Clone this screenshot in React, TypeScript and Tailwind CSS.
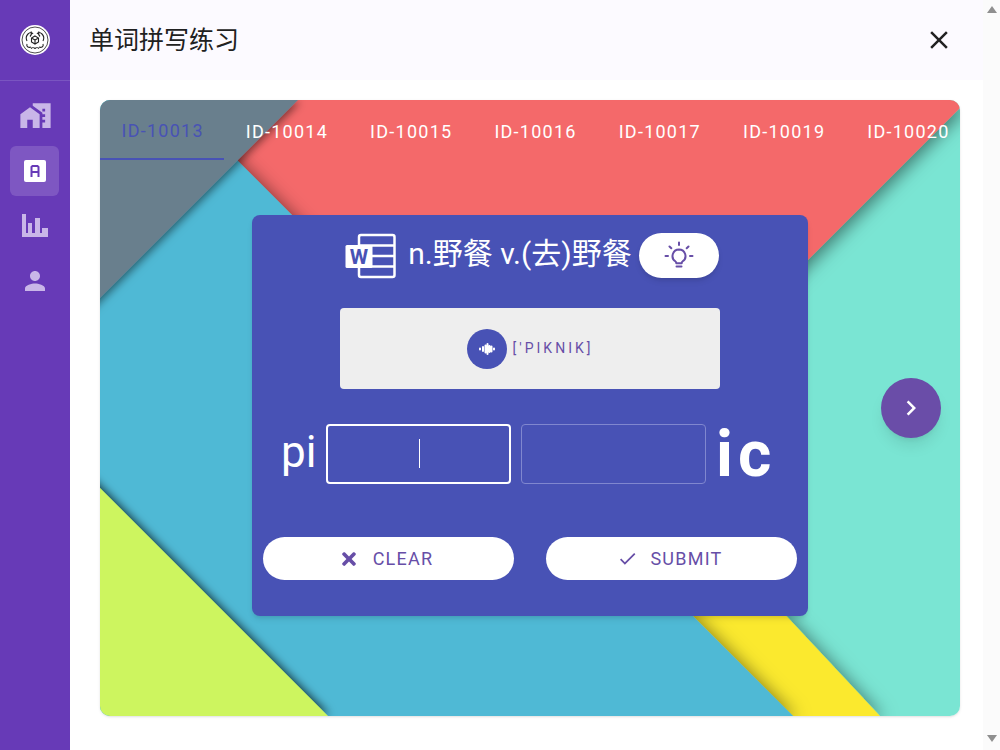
import { useState } from 'react';
import { MdMapsHomeWork, MdPerson, MdClose, MdCheck, MdChevronRight } from 'react-icons/md';
import { FaTimes } from 'react-icons/fa';

const tabs = ['ID-10013', 'ID-10014', 'ID-10015', 'ID-10016', 'ID-10017', 'ID-10019', 'ID-10020'];

function Backdrop() {
  return (
    <svg className="absolute inset-0 w-full h-full" viewBox="100 100 860 616" preserveAspectRatio="none">
      <defs>
        <filter id="shade" x="-20%" y="-20%" width="140%" height="140%">
          <feDropShadow dx="3" dy="3" stdDeviation="9" floodColor="#000" floodOpacity="0.5" />
        </filter>
        <filter id="shadeGreen" x="-20%" y="-20%" width="140%" height="140%">
          <feDropShadow dx="1" dy="-1" stdDeviation="5" floodColor="#000" floodOpacity="0.75" />
        </filter>
        <filter id="shadeSmall" x="-20%" y="-20%" width="140%" height="140%">
          <feDropShadow dx="2" dy="2" stdDeviation="4" floodColor="#000" floodOpacity="0.5" />
        </filter>
      </defs>
      <rect x="100" y="100" width="860" height="616" fill="#7ae5d3" />
      <polygon points="570,495 650,470 880,716 793,716" fill="#fbe92f" filter="url(#shade)" />
      <polygon points="177,100 960,100 960,108 572,496" fill="#f4696b" filter="url(#shade)" />
      <polygon points="40,100 177,100 793,716 40,716" fill="#4fb9d5" filter="url(#shade)" />
      <polygon points="40,428 328,716 40,716" fill="#cdf55f" filter="url(#shadeGreen)" />
      <polygon points="40,100 298,100 40,358" fill="#697f8d" filter="url(#shadeSmall)" />
    </svg>
  );
}

function WordIcon() {
  return (
    <svg width="51" height="46" viewBox="0 0 51 46" fill="none">
      <rect x="14" y="2" width="35.500" height="42" rx="2" stroke="#fff" strokeWidth="2.500" />
      <path d="M14 12.500H49M14 23H49M14 33.500H49" stroke="#fff" strokeWidth="2.500" />
      <rect x="0.500" y="12" width="27" height="23" rx="1.500" fill="#fff" />
      <text x="14" y="30.500" textAnchor="middle" fill="#4852b5" fontSize="21" fontWeight="700" fontFamily="Roboto, sans-serif">W</text>
    </svg>
  );
}

function BulbIcon() {
  return (
    <svg width="30" height="30" viewBox="0 0 30 30" fill="none" stroke="#674ea7" strokeWidth="2" strokeLinecap="round" strokeLinejoin="round">
      <path d="M15 8.500a6.500 6.500 0 0 0-3.700 11.800c.7.500 1 1.200 1 2h5.400c0-.8.300-1.500 1-2A6.500 6.500 0 0 0 15 8.500z" />
      <path d="M12.500 25.500h5" />
      <path d="M15 1.500v2.500M5.500 5.500l1.800 1.800M24.500 5.500l-1.800 1.800M1.500 15H4M26 15h2.500" />
    </svg>
  );
}

export default function App() {
  const [first, setFirst] = useState('');
  const [second, setSecond] = useState('');

  return (
    <div className="flex h-[750px] w-[1000px] overflow-hidden bg-white font-['Roboto','Noto_Sans_CJK_SC',sans-serif]">
      {/* 侧边栏 */}
      <aside className="w-[70px] shrink-0 bg-[#673ab7] flex flex-col items-center">
        <div className="w-full h-[81px] flex items-center justify-center border-b border-[#7a55c1]">
          <svg width="30" height="30" viewBox="0 0 30 30">
            <circle cx="15" cy="15" r="15" fill="#fff" />
            <circle cx="15" cy="15" r="13" fill="none" stroke="#222" strokeWidth="0.800" />
            <path d="M15 11l3.500 2v4L15 19l-3.500-2v-4zM15 15v4M15 15l3.500-2M15 15l-3.500-2M8 9c2-2 4-2 5 0M22 9c-2-2-4-2-5 0M7 19c-1 3 2 4 4 3M23 19c1 3-2 4-4 3M8 9c-2 2-2 5-1 7M22 9c2 2 2 5 1 7M11 6.500c1 2 0 4-1 5M19 6.500c-1 2 0 4 1 5M11 23.500c1-1 3-1 4 0M19 23.500c-1-1-3-1-4 0" fill="none" stroke="#222" strokeWidth="1.100" />
          </svg>
        </div>
        <div className="flex flex-col items-center pt-[10px]">
          <div className="w-[50px] h-[50px] flex items-center justify-center pb-[2px] text-[#c9b6e8]">
            <MdMapsHomeWork size={33} />
          </div>
          <div className="w-[49px] h-[50px] mt-[5px] mr-[1px] rounded-md bg-[#7e57c2] flex items-center justify-center">
            <svg width="24" height="24" viewBox="0 0 24 24">
              <rect x="1" y="1" width="22" height="22" rx="2" fill="#fff" />
              <path d="M8.500 18V8l1-1h5l1 1v10M8.500 13h7" fill="none" stroke="#673ab7" strokeWidth="2" />
            </svg>
          </div>
          <div className="w-[50px] h-[50px] mt-[5px] flex items-center justify-center">
            <svg width="26" height="24" viewBox="0 0 26 24" fill="#c9b6e8">
              <path d="M0 0h4v23H0zM6 9h4v14H6zM13 4h5v19h-5zM20 14h6v9h-6zM0 19h26v4H0z" />
            </svg>
          </div>
          <div className="w-[50px] h-[50px] mt-[5px] flex items-center justify-center text-[#c9b6e8]">
            <MdPerson size={30} />
          </div>
        </div>
      </aside>

      <div className="w-[913px] shrink-0 flex flex-col">
        <header className="h-[80px] bg-[#fcfaff] flex items-center justify-between pl-[19px] pr-[29px]">
          <h1 className="text-[25px] text-[#212121] pt-[1px]">单词拼写练习</h1>
          <MdClose size={30} className="text-[#212121]" />
        </header>

        {/* 主卡片 */}
        <main className="flex-1 pt-[20px] pl-[30px]">
          <section className="relative w-[860px] h-[616px] rounded-[10px] overflow-hidden shadow-sm">
            <Backdrop />
            <div className="relative flex h-[60px]">
              {tabs.map((t, i) => (
                <div
                  key={t}
                  className={`w-[124.300px] h-[60px] shrink-0 flex items-center justify-center pt-[3px] pl-[1px] text-lg tracking-[1.250px] ${
                    i === 0 ? 'text-[#4852b5] border-b-2 border-[#4852b5]' : 'text-white'
                  }`}
                >
                  {t}
                </div>
              ))}
            </div>

            <div className="relative flex justify-center">
              <div className="relative mt-[55px] w-[556px] h-[401px] rounded-lg bg-[#4852b5] shadow-md flex flex-col items-center">
                <div className="h-[76px] flex items-center pt-[5px] pl-[4px]">
                  <WordIcon />
                  <span className="ml-[12px] -mt-[4px] text-[30px] text-white leading-none">n.野餐 v.(去)野餐</span>
                  <button className="ml-[7px] w-[80px] h-[45px] rounded-full bg-white flex items-center justify-center shadow-md">
                    <BulbIcon />
                  </button>
                </div>

                <div className="mt-[17px] w-[380px] h-[81px] rounded bg-[#eeeeee] flex items-center justify-center">
                  <div className="w-[40px] h-[40px] rounded-full bg-[#4852b5] flex items-center justify-center">
                    <svg width="18" height="12" viewBox="0 0 18 12" stroke="#fff" strokeWidth="2" strokeLinecap="round">
                      <path d="M2 5.500v1M5 4v4M7.500 2.500v7M9.500 1v10M11.500 3v6M13.500 3.500v5M16 5.500v1" />
                    </svg>
                  </div>
                  <span className="ml-[6px] -mt-[2px] text-sm tracking-[3px] text-[#674ea7]">[&apos;PIKNIK]</span>
                </div>

                <div className="w-full mt-[35px] flex items-center pl-[29px] h-[60px]">
                  <span className="w-[35px] text-[44px] leading-none text-white -mt-[4px]">pi</span>
                  <div className="relative ml-[10px]">
                    <input
                      value={first}
                      onChange={e => setFirst(e.target.value)}
                      className="block w-[185px] h-[60px] rounded border-2 border-white bg-transparent text-center text-white text-2xl outline-none"
                    />
                    <span className="absolute left-[93px] top-[15px] w-px h-[29px] bg-white" />
                  </div>
                  <input
                    value={second}
                    onChange={e => setSecond(e.target.value)}
                    className="ml-[10px] w-[185px] h-[60px] rounded border border-[#8087cf] bg-transparent text-center text-white text-2xl outline-none"
                  />
                  <span className="ml-[10px] mt-[2px] text-[64px] leading-none font-bold tracking-[5px] text-white">ic</span>
                </div>

                <div className="w-full mt-[53px] flex justify-between px-[11px]">
                  <button className="w-[251px] h-[43px] rounded-full bg-white flex items-center justify-center gap-[14px] pr-[5px] text-[#674ea7] text-lg tracking-[1.250px]">
                    <FaTimes size={20} />
                    CLEAR
                  </button>
                  <button className="w-[251px] h-[43px] rounded-full bg-white flex items-center justify-center gap-[12px] pr-[3px] text-[#674ea7] text-lg tracking-[1.250px]">
                    <MdCheck size={21} />
                    SUBMIT
                  </button>
                </div>
              </div>

              <button className="absolute top-[218px] right-[19px] w-[60px] h-[60px] rounded-full bg-[#6a4da8] text-white shadow-lg flex items-center justify-center">
                <MdChevronRight size={30} />
              </button>
            </div>
          </section>
        </main>
      </div>

      {/* 滚动条 */}
      <div className="w-[17px] shrink-0 bg-[#fbfbfb] flex flex-col items-center justify-between pt-[6px] pb-[8px]">
        <div className="w-0 h-0 border-x-[5.500px] border-x-transparent border-b-[7px] border-b-[#8f8f8f]" />
        <div className="w-0 h-0 border-x-[5.500px] border-x-transparent border-t-[7px] border-t-[#8f8f8f]" />
      </div>
    </div>
  );
}
